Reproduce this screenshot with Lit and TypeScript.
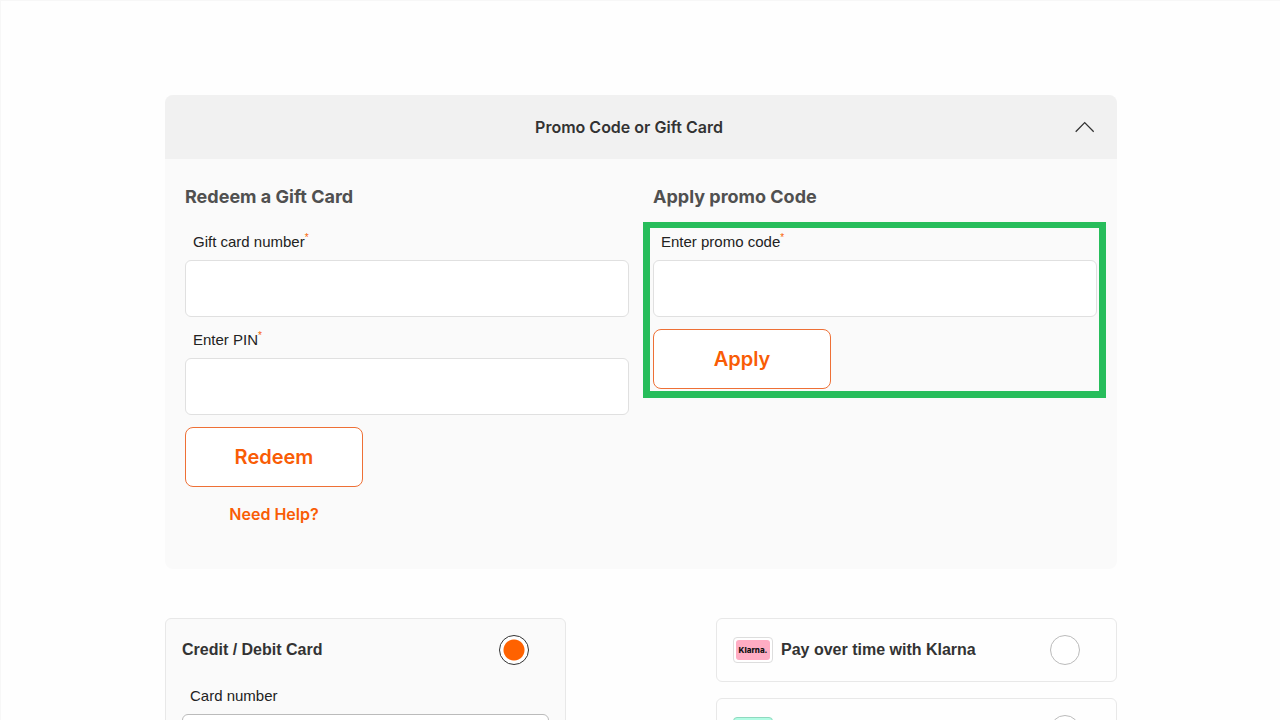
import { LitElement, html, css } from "lit";
import { customElement, state } from "lit/decorators.js";

@customElement("app-root")
export class AppRoot extends LitElement {
  @state() private open = true;
  @state() private method = "card";

  static styles = css`
    * {
      box-sizing: border-box;
    }
    :host {
      display: block;
      box-sizing: border-box;
      height: 100vh;
      overflow: hidden;
      padding: 94px 0 0 1px;
      border-top: 1px solid #f7f7f7;
      border-left: 1px solid #f7f7f7;
      background: #fefefe;
      color: #222;
      font: 15px/20px "Liberation Sans", Arial, sans-serif;
    }
    button,
    input {
      font: inherit;
      margin: 0;
    }
    .page {
      display: flex;
      flex-direction: column;
      gap: 49px;
      max-width: 952px;
      margin: 0 auto;
    }
    .panel {
      border-radius: 8px;
      background: #fafafa;
      overflow: hidden;
    }
    .toggle {
      display: flex;
      align-items: center;
      width: 100%;
      height: 64px;
      padding: 0 20px;
      border: 0;
      background: #f1f1f1;
      color: #333;
      font: 600 16px/24px Inter, sans-serif;
    }
    .toggle-text {
      flex: 1;
      text-align: center;
    }
    .chevron {
      display: block;
    }
    .columns {
      display: grid;
      grid-template-columns: 1fr 1fr;
      gap: 24px;
      padding: 24px 20px 42px;
    }
    .title {
      margin: 0 0 20px;
      color: #505050;
      font: 700 18px/28px Inter, sans-serif;
    }
    .form {
      position: relative;
      display: flex;
      flex-direction: column;
      align-items: flex-start;
      gap: 12px;
    }
    .highlight {
      position: absolute;
      inset: -9px -9px -9px -10px;
      border: 6px solid #27bd5b;
      border-width: 6px 7px 7px;
      pointer-events: none;
    }
    .field {
      display: flex;
      flex-direction: column;
      gap: 8px;
      width: 100%;
    }
    .label {
      padding: 1px 0 0 8px;
    }
    .star {
      color: #f96302;
      font-size: 10px;
      line-height: 0;
      vertical-align: 6px;
    }
    .input {
      width: 100%;
      height: 57px;
      padding: 0 16px;
      border: 1px solid #e0e0e0;
      border-radius: 6px;
      background: #fff;
    }
    .input.dark {
      border-color: #bbb;
    }
    .action {
      width: 178px;
      height: 60px;
      border: 1px solid #ee7036;
      border-radius: 8px;
      background: #fff;
      color: #f95c05;
      font: 600 20px/24px Inter, sans-serif;
    }
    .help {
      width: 178px;
      margin-top: 3px;
      padding-bottom: 1px;
      color: #f95c05;
      font: 600 16px/24px Inter, sans-serif;
      text-align: center;
      text-decoration: none;
    }
    .methods {
      display: grid;
      grid-template-columns: 401px 401px;
      justify-content: space-between;
      align-items: start;
    }
    .stack {
      display: grid;
      gap: 16px;
    }
    .method {
      border: 1px solid #e8e8e8;
      border-radius: 6px;
      padding: 0 16px;
    }
    .method.selected {
      background: #fafafa;
    }
    .choice {
      display: flex;
      align-items: center;
      gap: 8px;
      height: 62px;
      padding-right: 20px;
      color: #333;
      font-size: 16px;
      font-weight: 700;
    }
    .choice-text {
      flex: 1;
    }
    .radio {
      appearance: none;
      width: 30px;
      height: 30px;
      border: 1px solid #bbb;
      border-radius: 50%;
      background: #fff;
    }
    .radio:checked {
      border-color: #333;
      background: radial-gradient(circle, #ff6200 10px, #fff 11px);
    }
    .badge {
      display: flex;
      align-items: center;
      justify-content: center;
      width: 40px;
      height: 26px;
      padding: 2px;
      border: 1px solid #ddd;
      border-radius: 4px;
      background: #fff;
    }
    .badge.afterpay {
      border-color: #8fd9bf;
      background: #b2fce4;
    }
    .klarna {
      width: 100%;
      border-radius: 3px;
      background: #ffacc3;
      color: #111;
      font: 800 8px/20px Inter, sans-serif;
      text-align: center;
    }
    .card-fields {
      padding: 4px 0 16px;
    }
  `;

  private field(id: string, label: string) {
    return html`<div class="field">
      <label class="label" for=${id}>${label}<span class="star">*</span></label>
      <input class="input" id=${id} type="text" required />
    </div>`;
  }

  private radio(value: string) {
    return html`<input
      class="radio"
      type="radio"
      name="method"
      id=${value}
      .checked=${this.method === value}
      @change=${() => (this.method = value)}
    />`;
  }

  render() {
    return html`<main class="page">
      <section class="panel">
        <button class="toggle" aria-expanded=${this.open} @click=${() => (this.open = !this.open)}>
          <span class="toggle-text">Promo Code or Gift Card</span>
          <svg class="chevron" width="24" height="24" viewBox="0 0 24 24" fill="none" stroke="#333" stroke-width="1.3">
            <path d="M2.7 16.7L11.7 7.6L20.7 16.7" />
          </svg>
        </button>
        ${this.open
          ? html`<div class="columns">
              <div>
                <h2 class="title">Redeem a Gift Card</h2>
                <div class="form">
                  ${this.field("gift", "Gift card number")} ${this.field("pin", "Enter PIN")}
                  <button class="action">Redeem</button>
                  <a class="help" href="#help">Need Help?</a>
                </div>
              </div>
              <div>
                <h2 class="title">Apply promo Code</h2>
                <div class="form">
                  ${this.field("promo", "Enter promo code")}
                  <button class="action">Apply</button>
                  <div class="highlight"></div>
                </div>
              </div>
            </div>`
          : ""}
      </section>
      <section class="methods">
        <div class="method selected">
          <div class="choice">
            <label class="choice-text" for="card">Credit / Debit Card</label>
            ${this.radio("card")}
          </div>
          <div class="field card-fields">
            <label class="label" for="number">Card number</label>
            <input class="input dark" id="number" type="text" />
          </div>
        </div>
        <div class="stack">
          <div class="method">
            <div class="choice">
              <span class="badge"><span class="klarna">Klarna.</span></span>
              <label class="choice-text" for="klarna">Pay over time with Klarna</label>
              ${this.radio("klarna")}
            </div>
          </div>
          <div class="method">
            <div class="choice">
              <span class="badge afterpay"></span>
              <label class="choice-text" for="afterpay"></label>
              ${this.radio("afterpay")}
            </div>
          </div>
        </div>
      </section>
    </main>`;
  }
}
